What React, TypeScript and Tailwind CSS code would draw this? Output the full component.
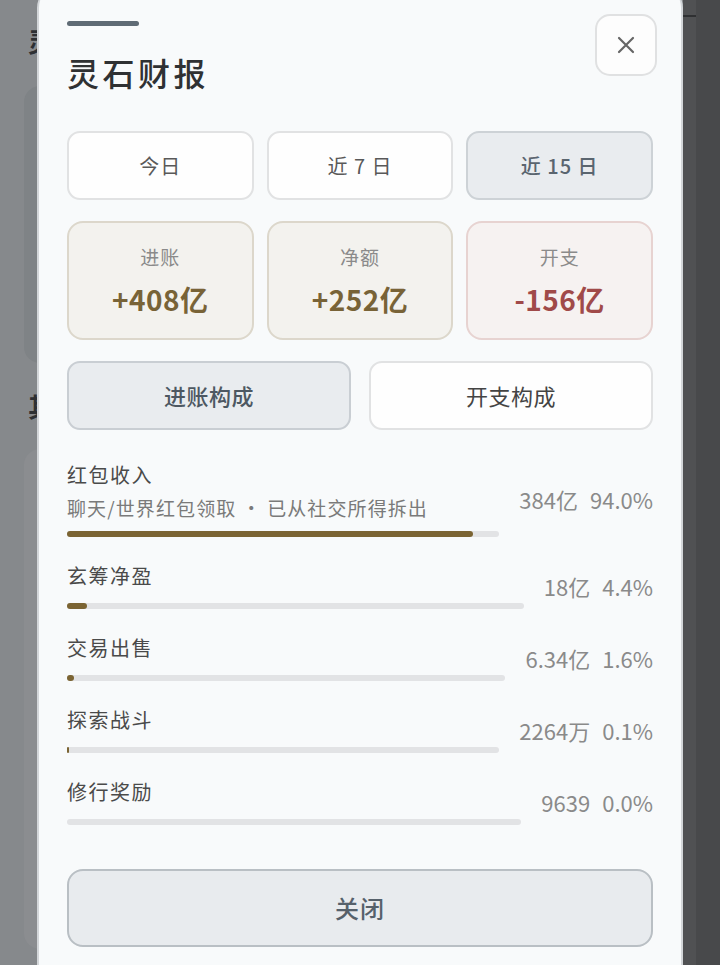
import React from "react";

type Row = {
  name: string;
  note?: string;
  amount: string;
  pct: number;
};

const rows: Row[] = [
  { name: "红包收入", note: "聊天/世界红包领取 · 已从社交所得拆出", amount: "384亿", pct: 94.0 },
  { name: "玄筹净盈", amount: "18亿", pct: 4.4 },
  { name: "交易出售", amount: "6.34亿", pct: 1.6 },
  { name: "探索战斗", amount: "2264万", pct: 0.1 },
  { name: "修行奖励", amount: "9639", pct: 0.0 },
];

const font = { fontFamily: '"Noto Sans CJK SC", "Noto Sans", sans-serif' };

function RangeTab({ label, active }: { label: string; active?: boolean }) {
  return (
    <button
      className={
        active
          ? "h-full rounded-[13px] border-2 border-[#cdd2d6] bg-[#e9ecef] text-[20px] font-medium tracking-[1px] text-[#5a656f]"
          : "h-full rounded-[13px] border-2 border-[#e1e2e3] bg-[#fefefe] text-[20px] tracking-[1px] text-[#595959]"
      }
    >
      {label}
    </button>
  );
}

function StatCard({ label, value, tone }: { label: string; value: string; tone: "gold" | "red" }) {
  const box =
    tone === "red"
      ? "flex flex-col items-center justify-center rounded-[16px] border-2 border-[#e7d3d1] bg-[#f6f2f1]"
      : "flex flex-col items-center justify-center rounded-[16px] border-2 border-[#dcd7cb] bg-[#f3f2ee]";
  const num =
    tone === "red"
      ? "mt-[11px] text-[28px] font-bold leading-[36px] tracking-[0.5px] text-[#a04a49]"
      : "mt-[11px] text-[28px] font-bold leading-[36px] tracking-[0.5px] text-[#786337]";
  return (
    <div className={box}>
      <div className="text-[19px] leading-[26px] tracking-[1px] text-[#8a8a8a]">{label}</div>
      <div className={num}>{value}</div>
    </div>
  );
}

function BreakdownRow({ row }: { row: Row }) {
  const fill = row.pct > 0 ? Math.max(row.pct, 0.5) : 0;
  return (
    <div className="flex items-center gap-5">
      <div className="flex-1">
        <div className="text-[20px] leading-[28px] tracking-[1.5px] text-[#4a4a4a]">{row.name}</div>
        {row.note && (
          <div className="mt-[6px] text-[19px] leading-[26px] tracking-[1.1px] text-[#7a7a7a]">{row.note}</div>
        )}
        <div className={row.note ? "mt-[10px] h-[6px] rounded-full bg-[#e2e3e5]" : "mt-[13px] h-[6px] rounded-full bg-[#e2e3e5]"}>
          <div className="h-full rounded-full bg-[#7b6433]" style={{ width: `${fill}%` }} />
        </div>
      </div>
      <div className="flex gap-3 text-[22px] leading-[30px] text-[#8a8a8a]">
        <span>{row.amount}</span>
        <span>{row.pct.toFixed(1)}%</span>
      </div>
    </div>
  );
}

export default function App() {
  return (
    <div className="flex h-[965px] w-[720px] overflow-hidden bg-[#86898c]" style={font}>
      {/* dimmed page behind the sheet */}
      <div className="flex w-[37px] shrink-0 flex-col overflow-hidden bg-[#86898c]">
        <div className="mt-[26px] ml-[28px] whitespace-nowrap text-[26px] font-bold leading-[30px] text-[#2e3033]">灵石</div>
        <div className="mt-[30px] ml-[24px] h-[277px] w-[40px] rounded-l-[16px] bg-[#7f8386]" />
        <div className="mt-[28px] ml-[28px] whitespace-nowrap text-[26px] font-bold leading-[30px] text-[#2e3033]">其他</div>
        <div className="mt-[28px] ml-[24px] h-[500px] w-[40px] rounded-l-[16px] bg-[#8b8d90]" />
      </div>

      <div className="-mt-[16px] flex w-[646px] shrink-0 flex-col rounded-t-[24px] border-x-2 border-[#d3d6d9] bg-[#f8fafb] px-[28px] pt-[30px]">
        <div className="flex items-start justify-between">
          <div className="flex flex-col">
            <div className="mt-[7px] h-[5px] w-[72px] rounded-full bg-[#5f6b75]" />
            <h1 className="mt-[26px] text-[32px] font-medium leading-[40px] tracking-[3.5px] text-[#2f3133]">灵石财报</h1>
          </div>
          <button className="-mr-[4px] flex h-[62px] w-[62px] items-center justify-center rounded-[15px] border-2 border-[#e0e1e2] bg-[#fdfdfd]">
            <svg width="18" height="18" viewBox="0 0 18 18" fill="none" stroke="#666666" strokeWidth="2.2" strokeLinecap="round">
              <path d="M2 2 L16 16 M16 2 L2 16" />
            </svg>
          </button>
        </div>

        <div className="mt-[39px] grid h-[69px] grid-cols-3 gap-[13px]">
          <RangeTab label="今日" />
          <RangeTab label="近 7 日" />
          <RangeTab label="近 15 日" active />
        </div>

        <div className="mt-[21px] grid h-[119px] grid-cols-3 gap-[13px]">
          <StatCard label="进账" value="+408亿" tone="gold" />
          <StatCard label="净额" value="+252亿" tone="gold" />
          <StatCard label="开支" value="-156亿" tone="red" />
        </div>

        <div className="mt-[21px] grid h-[69px] grid-cols-2 gap-[18px]">
          <button className="h-full rounded-[13px] border-2 border-[#c9ced3] bg-[#e9ecef] text-[22px] font-medium tracking-[0.5px] text-[#4d5862]">
            进账构成
          </button>
          <button className="h-full rounded-[13px] border-2 border-[#e1e2e3] bg-[#fefefe] text-[22px] tracking-[0.5px] text-[#444444]">
            开支构成
          </button>
        </div>

        <div className="mt-[31px] flex flex-col gap-[25px]">
          {rows.map((r) => (
            <BreakdownRow key={r.name} row={r} />
          ))}
        </div>

        <button className="mt-[44px] h-[78px] w-full shrink-0 rounded-[16px] border-2 border-[#b9bfc4] bg-[#e8ebee] text-[24px] font-medium tracking-[1px] text-[#56616b]">
          关闭
        </button>
      </div>

      <div className="flex w-[37px] shrink-0 bg-[#48494b]">
        <div className="w-[13px] bg-[#505153]">
          <div className="mt-[15px] h-[2px] w-full bg-[#2f3032]" />
        </div>
      </div>
    </div>
  );
}
